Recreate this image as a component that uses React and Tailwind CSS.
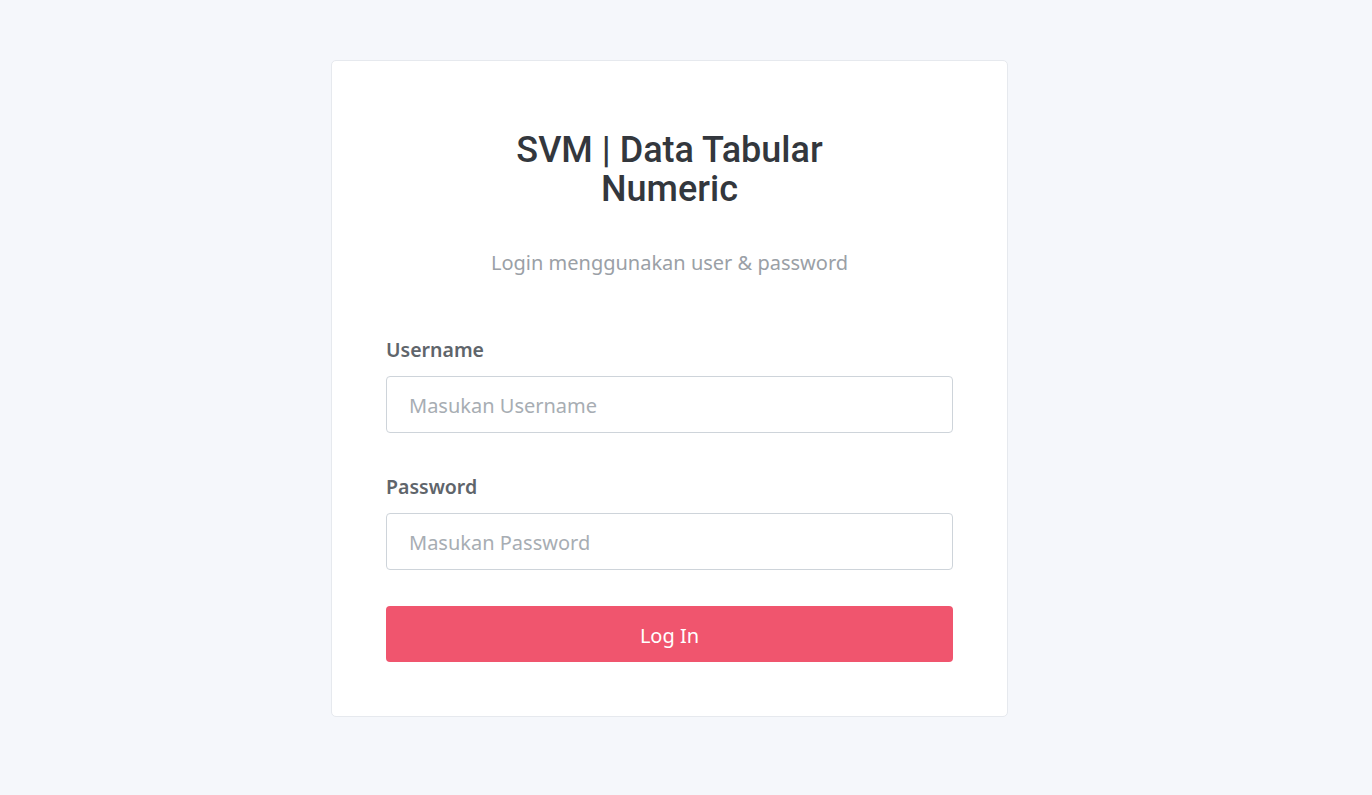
export default function App() {
  return (
    <div className="min-h-screen w-full bg-[#f5f7fb] font-['Noto_Sans',sans-serif]">
      <div className="flex pt-[60px] pl-[331px]">
        <div className="w-[677px] rounded-[5px] border border-[#e6e9ee] bg-white px-[54px] pt-[70px] pb-[54px]">
          <h1 className="mx-auto max-w-[340px] text-center font-['Roboto',sans-serif] text-[36px] font-medium leading-[39px] text-[#33373d]">
            SVM | Data Tabular Numeric
          </h1>
          <p className="mt-[40px] text-center text-[20px] leading-[28px] text-[#9aa0a6]">
            Login menggunakan user &amp; password
          </p>
          <form className="mt-[59px]" onSubmit={(e) => e.preventDefault()}>
            <div>
              <label className="block text-[19.5px] font-semibold leading-[28px] text-[#5f656b]">
                Username
              </label>
              <input
                type="text"
                placeholder="Masukan Username"
                className="mt-[12px] h-[57px] w-full rounded-[4px] border border-[#ced4da] px-[22px] pt-[2px] text-[20px] text-[#495057] outline-none placeholder:text-[#a7adb3]"
              />
            </div>
            <div className="mt-[40px]">
              <label className="block text-[19.5px] font-semibold leading-[28px] text-[#5f656b]">
                Password
              </label>
              <input
                type="password"
                placeholder="Masukan Password"
                className="mt-[12px] h-[57px] w-full rounded-[4px] border border-[#ced4da] px-[22px] pt-[2px] text-[20px] text-[#495057] outline-none placeholder:text-[#a7adb3]"
              />
            </div>
            <button
              type="submit"
              className="mt-[36px] h-[56px] w-full rounded-[4px] bg-[#f0556e] pt-[3px] text-[20px] text-white"
            >
              Log In
            </button>
          </form>
        </div>
      </div>
    </div>
  );
}
